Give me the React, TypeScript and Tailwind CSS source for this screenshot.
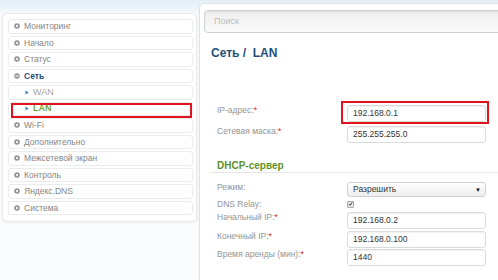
import React from 'react';

/**
 * Router web UI — "Сеть / LAN" settings page, left nav + form panel.
 */

type Kind = 'top' | 'open' | 'sub' | 'active';
type Item = { label: string; kind: Kind };

const MENU: readonly Item[] = [
  { label: 'Мониторинг', kind: 'top' },
  { label: 'Начало', kind: 'top' },
  { label: 'Статус', kind: 'top' },
  { label: 'Сеть', kind: 'open' },
  { label: 'WAN', kind: 'sub' },
  { label: 'LAN', kind: 'active' },
  { label: 'Wi-Fi', kind: 'top' },
  { label: 'Дополнительно', kind: 'top' },
  { label: 'Межсетевой экран', kind: 'top' },
  { label: 'Контроль', kind: 'top' },
  { label: 'Яндекс.DNS', kind: 'top' },
  { label: 'Система', kind: 'top' },
];

/** Small round grey bullet — gear for closed groups, minus for the open one. */
function GroupIcon({ open }: { open: boolean }) {
  return (
    <svg width="6" height="6" viewBox="0 0 6 6" aria-hidden className="shrink-0">
      <circle cx="3" cy="3" r="2.8" fill="#959595" />
      {open ? (
        <rect x="1.4" y="2.5" width="3.2" height="1" fill="#fff" />
      ) : (
        <circle cx="3" cy="3" r="1.1" fill="#fff" />
      )}
    </svg>
  );
}

function SubArrow() {
  return (
    <svg width="4" height="5" viewBox="0 0 4 5" aria-hidden className="shrink-0">
      <path d="M0.5 0.5 L3.5 2.5 L0.5 4.5 Z" fill="#2f7fc1" />
    </svg>
  );
}

function MenuRow({ item }: { item: Item }) {
  const sub = item.kind === 'sub' || item.kind === 'active';
  return (
    <li className="relative flex h-[14.5px] items-center rounded-[3px] border border-[#ebeced] bg-white">
      {sub ? (
        <span className="flex items-center gap-[4px] pl-[16px]">
          <SubArrow />
          <span
            className={
              item.kind === 'active'
                ? 'text-[9px] font-bold leading-none text-[#78a22f]'
                : 'text-[9px] leading-none text-[#a5a5a5]'
            }
          >
            {item.label}
          </span>
        </span>
      ) : (
        <span className="flex items-center gap-[4px] pl-[5px]">
          <GroupIcon open={item.kind === 'open'} />
          <span
            className={
              item.kind === 'open'
                ? 'text-[8.5px] font-bold leading-none text-[#1f4e7c]'
                : 'text-[8.5px] leading-none text-[#858585]'
            }
          >
            {item.label}
          </span>
        </span>
      )}
      {item.kind === 'active' && (
        <span aria-hidden className="absolute -bottom-[2.5px] left-[2px] right-0 top-0 border-2 border-[#e2131d]" />
      )}
    </li>
  );
}

function Label({ text, req }: { text: string; req?: boolean }) {
  return (
    <span className="w-[130px] shrink-0 text-[8.5px] leading-[10px] text-[#959595]">
      {text}
      {req && <span className="text-[#e2131d]">*</span>}
    </span>
  );
}

function Field({ value }: { value: string }) {
  return (
    <div className="flex h-[17px] w-[139px] items-center rounded-[3px] border border-[#d9dcdf] bg-white px-[5px] text-[8.5px] text-[#333] shadow-[inset_0_1px_1px_rgba(0,0,0,0.06)]">
      {value}
    </div>
  );
}

export default function App() {
  return (
    <div className="relative h-[280px] w-[498px] overflow-hidden bg-[linear-gradient(to_bottom,#e3eff8_0px,#edf5fa_9px,#fafbfc_14px)] font-['Liberation_Sans',Arial,sans-serif]">
      <div className="flex items-start">
        {/* Left navigation */}
        <aside className="ml-[2px] mt-[13px] w-[195px] shrink-0 rounded-[5px] border border-[#e8eaec] bg-white pb-[6px] pl-[5px] pr-[3px] pt-[5px] shadow-[0_1px_3px_rgba(0,0,0,0.05)]">
          <ul className="flex flex-col gap-[2px]">
            {MENU.map((m) => (
              <MenuRow key={m.label} item={m} />
            ))}
          </ul>
        </aside>

        {/* Content panel */}
        <main className="ml-[2px] mt-[3px] h-[300px] w-[320px] shrink-0 rounded-tl-[5px] border border-[#e0e3e6] bg-white pl-[4px] pt-[6px] shadow-[0_1px_3px_rgba(0,0,0,0.05)]">
          <div className="flex h-[23px] items-center rounded-[4px] border border-[#cfd3d6] bg-[linear-gradient(to_bottom,#efefef,#fbfbfb)] pl-[9px] text-[9px] text-[#bcbcbc] shadow-[inset_0_1px_2px_rgba(0,0,0,0.08)]">
            Поиск
          </div>

          <h1 className="mt-[13px] whitespace-pre pl-[7px] text-[12px] font-bold leading-[14px] text-[#1e4f7d]">
            {'Сеть /  LAN'}
          </h1>

          <div className="mt-[45px] flex flex-col gap-[4px] pl-[13px]">
            <div className="flex items-start">
              <Label text="IP-адрес:" req />
              <div className="relative">
                <Field value="192.168.0.1" />
                <span aria-hidden className="absolute -bottom-[2px] -left-[6px] -right-[3px] -top-[4px] border-2 border-[#e2131d]" />
              </div>
            </div>
            <div className="flex items-start">
              <Label text="Сетевая маска:" req />
              <Field value="255.255.255.0" />
            </div>
          </div>

          <h2 className="ml-[6px] mt-[17px] border-b border-[#e8e8e8] pb-[1px] pl-[7px] text-[10px] font-bold leading-[11px] text-[#5e9129]">
            DHCP-сервер
          </h2>

          <div className="mt-[9px] flex flex-col pl-[13px]">
            <div className="flex items-start">
              <Label text="Режим:" />
              <div className="flex h-[15px] w-[139px] items-center justify-between rounded-[3px] border border-[#cfd3d6] bg-[linear-gradient(to_bottom,#ffffff,#ededed)] pl-[5px] pr-[4px] text-[8.5px] text-[#333]">
                Разрешить
                <span className="text-[6px] leading-none text-[#111]">▼</span>
              </div>
            </div>
            <div className="mt-[2px] flex h-[10px] items-center">
              <Label text="DNS Relay:" />
              <span className="flex h-[7px] w-[7px] items-center justify-center rounded-[1px] border border-[#a9a9a9] bg-[#e8e8e8]">
                <svg width="6" height="6" viewBox="0 0 6 6" aria-hidden>
                  <path d="M1 3.2 L2.4 4.6 L5 1.2" stroke="#222" strokeWidth="1.1" fill="none" />
                </svg>
              </span>
            </div>
            <div className="mt-[3px] flex flex-col gap-[1.5px]">
              <div className="flex items-start">
                <Label text="Начальный IP:" req />
                <Field value="192.168.0.2" />
              </div>
              <div className="flex items-start">
                <Label text="Конечный IP:" req />
                <Field value="192.168.0.100" />
              </div>
              <div className="flex items-start">
                <Label text="Время аренды (мин):" req />
                <Field value="1440" />
              </div>
            </div>
          </div>
        </main>
      </div>
    </div>
  );
}
